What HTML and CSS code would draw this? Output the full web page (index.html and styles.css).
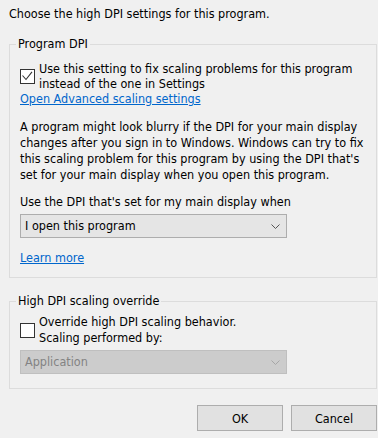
FILE: index.html
```html
<!DOCTYPE html>
<html lang="en">
<head>
    <meta charset="UTF-8">
    <meta name="viewport" content="width=device-width, initial-scale=1.0">
    <title>High DPI settings</title>

    <link rel="stylesheet" href="styles.css">

</head>
<body>
    <p class="intro">Choose the high DPI settings for this program.</p>

    <fieldset class="grupo grupo-dpi">
        <legend>Program DPI</legend>
        <div class="linha-check">
            <span class="caixa">
                <svg width="13" height="13" viewBox="0 0 13 13"><path d="M1.5 5.5 L5 9.5 L11 1.8" fill="none" stroke="#333" stroke-width="1.1"/></svg>
            </span>
            <span class="rotulo">Use this setting to fix scaling problems for this program<br>instead of the one in Settings</span>
        </div>
        <a class="link" href="#">Open Advanced scaling settings</a>

        <p class="texto">A program might look blurry if the DPI for your main display<br>changes after you sign in to Windows. Windows can try to fix<br>this scaling problem for this program by using the DPI that's<br>set for your main display when you open this program.</p>

        <p class="titulo-select">Use the DPI that's set for my main display when</p>
        <div class="select">
            <span>I open this program</span>
            <svg width="9" height="5" viewBox="0 0 9 5"><path d="M0.5 0.5 L4.5 4.5 L8.5 0.5" fill="none" stroke="#555" stroke-width="1"/></svg>
        </div>

        <a class="link link-mais" href="#">Learn more</a>
    </fieldset>

    <fieldset class="grupo grupo-override">
        <legend>High DPI scaling override</legend>
        <div class="linha-check linha-override">
            <span class="caixa"></span>
            <span class="rotulo">Override high DPI scaling behavior.<br>Scaling performed by:</span>
        </div>
        <div class="select desativado">
            <span>Application</span>
            <svg width="9" height="5" viewBox="0 0 9 5"><path d="M0.5 0.5 L4.5 4.5 L8.5 0.5" fill="none" stroke="#a6a6a6" stroke-width="1"/></svg>
        </div>
    </fieldset>

    <div class="botoes">
        <button>OK</button>
        <button>Cancel</button>
    </div>
</body>
</html>
```

FILE: styles.css
```css
body
{
    margin: 0;
    padding: 6px 0 0 9px;
    background-color: #f0f0f0;
    color: #000;
    font-family: "DejaVu Sans Condensed", "DejaVu Sans", sans-serif;
    font-stretch: condensed;
    font-size: 12.5px;
    line-height: 16px;
}
p
{
    margin: 0;
}
.intro
{
    margin-bottom: 14px;
}
.grupo
{
    box-sizing: border-box;
    width: 368px;
    margin: 0;
    padding: 0 10px;
    border: 1px solid #dcdcdc;
}
.grupo legend
{
    padding: 0 2px;
    margin-left: -4px;
    line-height: 16px;
}
.grupo-dpi
{
    padding-top: 9px;
    padding-bottom: 11px;
}
.grupo-override
{
    margin-top: 15px;
    padding-top: 5px;
    padding-bottom: 14px;
}
.linha-check
{
    display: flex;
    align-items: center;
    gap: 4px;
    line-height: 15px;
}
.linha-override
{
    line-height: 16px;
}
.caixa
{
    box-sizing: border-box;
    width: 15px;
    height: 15px;
    border: 1px solid #333;
    background-color: #fff;
    display: flex;
    justify-content: center;
    align-items: center;
    flex-shrink: 0;
}
.rotulo
{
    white-space: nowrap;
}
.link
{
    display: block;
    width: max-content;
    color: #0066cc;
    text-decoration: underline;
}
.texto
{
    margin-top: 12px;
    white-space: nowrap;
}
.titulo-select
{
    margin-top: 11px;
}
.select
{
    box-sizing: border-box;
    width: 267px;
    height: 24px;
    margin-top: 4px;
    padding: 0 6px 0 4px;
    border: 1px solid #adadad;
    background-color: #e5e5e5;
    display: flex;
    justify-content: space-between;
    align-items: center;
}
.select.desativado
{
    border-color: #bfbfbf;
    background-color: #cccccc;
    color: #838383;
}
.link-mais
{
    margin-top: 12px;
}
.botoes
{
    width: 368px;
    margin-top: 16px;
    display: flex;
    justify-content: flex-end;
    gap: 8px;
}
button
{
    width: 86px;
    height: 26px;
    padding: 0;
    border: 1px solid #adadad;
    background-color: #e1e1e1;
    color: #000;
    font-family: inherit;
    font-stretch: condensed;
    font-size: 12.5px;
}
```
